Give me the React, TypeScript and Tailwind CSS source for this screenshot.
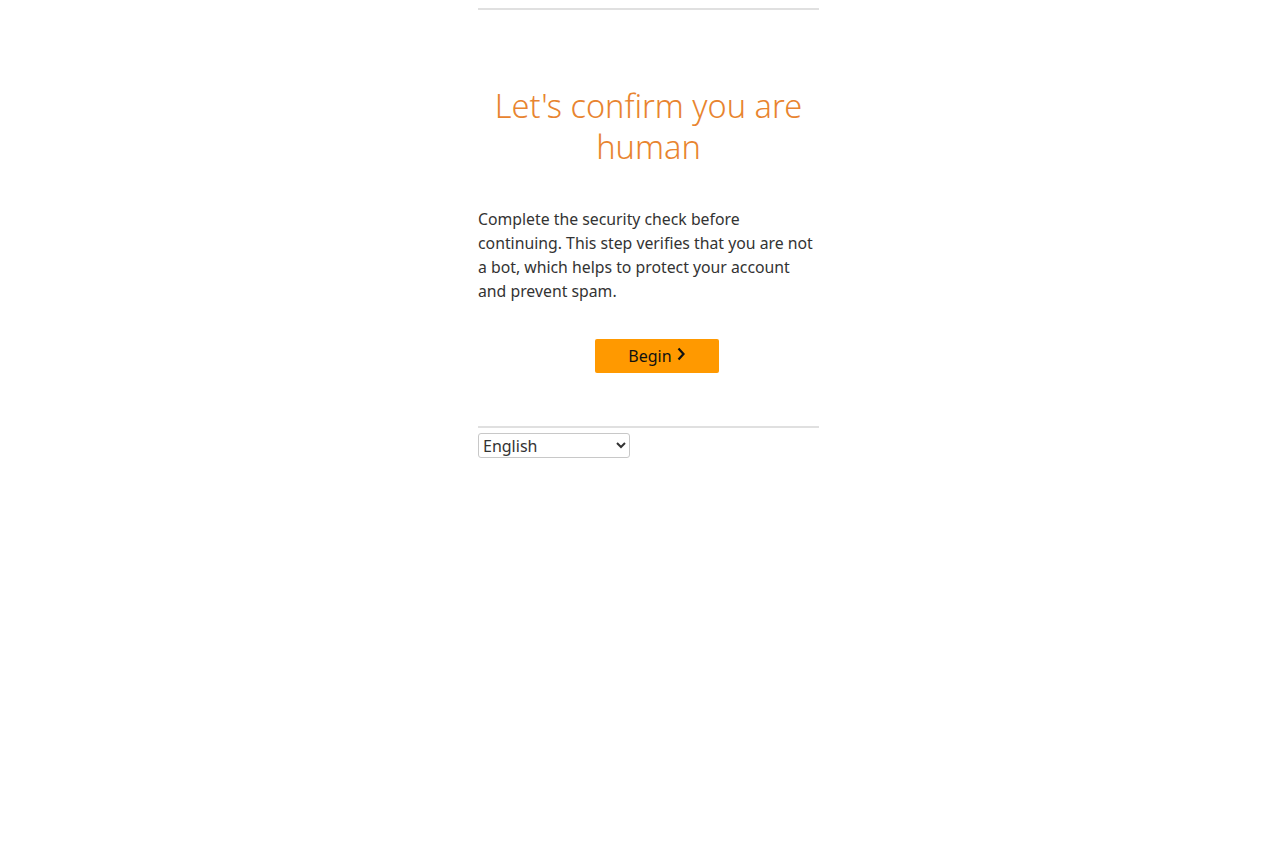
import React from "react";

export default function App() {
  return (
    <div className="min-h-[853px] bg-white" style={{ fontFamily: '"Noto Sans", Arial, sans-serif' }}>
      <div className="ml-[478px] w-[341px]">
        <div className="h-[8px]" />
        <div className="border-t-2 border-[#e0e0e0]" />
        <h1 className="mt-[75px] text-center text-[32.5px] leading-[41px] font-light text-[#e8842f]">
          Let's confirm you are human
        </h1>
        <p className="mt-[40px] text-[15.8px] leading-[24px] text-[#333333]">
          Complete the security check before continuing. This step verifies that you are not a bot, which helps to protect your account and prevent spam.
        </p>
        <div className="mt-[36px] flex justify-center pl-[17px]">
          <button className="flex h-[34px] w-[124px] items-center justify-center gap-[4px] rounded-[2px] bg-[#ff9900] text-[16px] text-[#111111]">
            <span>Begin</span>
            <svg width="10" height="14" viewBox="0 0 10 14" className="-mt-[4px]">
              <path d="M2.5 1.5 L7.5 7 L2.5 12.5" fill="none" stroke="#111" strokeWidth="2.2" />
            </svg>
          </button>
        </div>
        <div className="mt-[53px] border-t-2 border-[#e0e0e0]" />
        <div className="mt-[5px]">
          <select className="h-[25px] w-[152px] rounded-[3px] border border-[#c8c8c8] bg-white pl-0 text-[16px] text-[#333]">
            <option>English</option>
          </select>
        </div>
      </div>
    </div>
  );
}
